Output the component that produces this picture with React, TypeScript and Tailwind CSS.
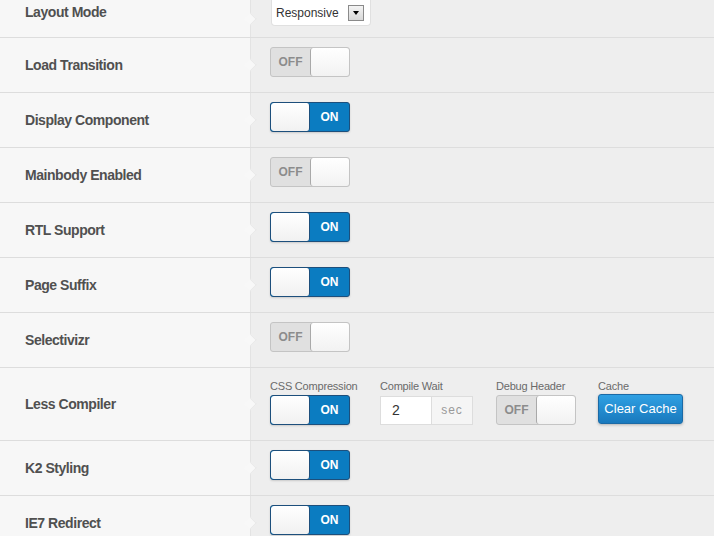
import React from "react";

const font = { fontFamily: '"Liberation Sans", Arial, sans-serif' };

function Toggle({ on }: { on: boolean }) {
  if (on) {
    return (
      <div className="flex h-[30px] w-[80px] overflow-hidden rounded-[3px] border border-[#1d4f7c] bg-[#0b7cc1] shadow-[0_1px_2px_rgba(0,0,0,0.15)]">
        <div className="h-full w-[39px] rounded-[3px] border-r border-[#1d4f7c] bg-gradient-to-b from-white to-[#f1f1f1]" />
        <div className="flex flex-1 items-center justify-center text-[12px] font-bold text-white">ON</div>
      </div>
    );
  }
  return (
    <div className="flex h-[30px] w-[80px] overflow-hidden rounded-[3px] border border-[#c4c4c4] bg-[#e0e0e0]">
      <div className="flex w-[39px] items-center justify-center text-[12px] font-bold text-[#8c8c8c]">OFF</div>
      <div className="h-full flex-1 rounded-[3px] border-l border-[#a9a9a9] bg-gradient-to-b from-white to-[#f2f2f2]" />
    </div>
  );
}

function Notch() {
  return (
    <div className="absolute right-[-5px] top-1/2 h-[9px] w-[9px] -translate-y-1/2 rotate-45 border-r border-t border-[#e8e8e8] bg-[#f8f8f8]" />
  );
}

function Row({
  label,
  children,
  h = "h-[55px]",
  rightPad = "pb-[6px]",
}: {
  label: string;
  children: React.ReactNode;
  h?: string;
  rightPad?: string;
}) {
  return (
    <div className={`flex ${h} border-b border-[#dddddd]`}>
      <div className="relative flex w-[251px] shrink-0 items-center border-r border-[#e3e3e3] bg-[#f7f7f7] pl-[25px]">
        <span className="text-[14px] font-bold tracking-[-0.45px] text-[#505050]">{label}</span>
        <Notch />
      </div>
      <div className={`flex flex-1 items-center pl-[19px] ${rightPad}`}>{children}</div>
    </div>
  );
}

function Field({ label, w, children }: { label: string; w: string; children: React.ReactNode }) {
  return (
    <div className={`flex flex-col ${w}`}>
      <span className="mb-[2px] whitespace-nowrap text-[11px] leading-[13px] tracking-[-0.2px] text-[#6a6a6a]">{label}</span>
      {children}
    </div>
  );
}

export default function App() {
  return (
    <div style={font} className="h-[536px] w-[714px] overflow-hidden bg-[#eeeeee]">
      <div className="flex h-[38px] border-b border-[#dddddd]">
        <div className="relative w-[251px] shrink-0 border-r border-[#e3e3e3] bg-[#f7f7f7]">
          <div className="flex h-[25px] items-center pl-[25px]">
            <span className="text-[14px] font-bold tracking-[-0.45px] text-[#505050]">Layout Mode</span>
            <Notch />
          </div>
        </div>
        <div className="flex flex-1 items-start pl-[20px]">
          <div className="flex h-[26px] w-[100px] items-center justify-between rounded-b-[4px] border border-t-0 border-[#e0e0e0] bg-white pl-[4px] pr-[6px]">
            <span className="text-[12px] text-[#333]">Responsive</span>
            <div className="flex h-[16px] w-[16px] items-center justify-center border border-[#8a8a8a] bg-gradient-to-b from-[#f4f4f4] to-[#d8d8d8]">
              <div className="h-0 w-0 border-x-[3px] border-t-[4px] border-x-transparent border-t-black" />
            </div>
          </div>
        </div>
      </div>
      <Row label="Load Transition"><Toggle on={false} /></Row>
      <Row label="Display Component"><Toggle on /></Row>
      <Row label="Mainbody Enabled"><Toggle on={false} /></Row>
      <Row label="RTL Support"><Toggle on /></Row>
      <Row label="Page Suffix"><Toggle on /></Row>
      <Row label="Selectivizr"><Toggle on={false} /></Row>
      <Row label="Less Compiler" h="h-[73px]" rightPad="pb-[4px]">
        <div className="flex items-start">
          <Field label="CSS Compression" w="w-[110px]"><Toggle on /></Field>
          <Field label="Compile Wait" w="w-[116px]">
            <div className="mt-[1px] flex h-[29px]">
              <div className="flex w-[52px] items-center border border-[#dddddd] bg-white pl-[11px] text-[14px] text-[#333]">2</div>
              <div className="flex w-[41px] items-center justify-center border border-l-0 border-[#dddddd] bg-[#f5f5f5] text-[12px] tracking-[1px] text-[#999]">sec</div>
            </div>
          </Field>
          <Field label="Debug Header" w="w-[102px]"><Toggle on={false} /></Field>
          <Field label="Cache" w="w-[90px]">
            <div className="mt-[-1px] flex h-[30px] w-[85px] items-center justify-center rounded-[3px] border border-[#1b6aa6] bg-gradient-to-b from-[#2fa0e3] to-[#1979bd] text-[13px] text-white shadow-[0_1px_3px_rgba(0,0,0,0.25)]">
              Clear Cache
            </div>
          </Field>
        </div>
      </Row>
      <Row label="K2 Styling"><Toggle on /></Row>
      <Row label="IE7 Redirect"><Toggle on /></Row>
    </div>
  );
}
